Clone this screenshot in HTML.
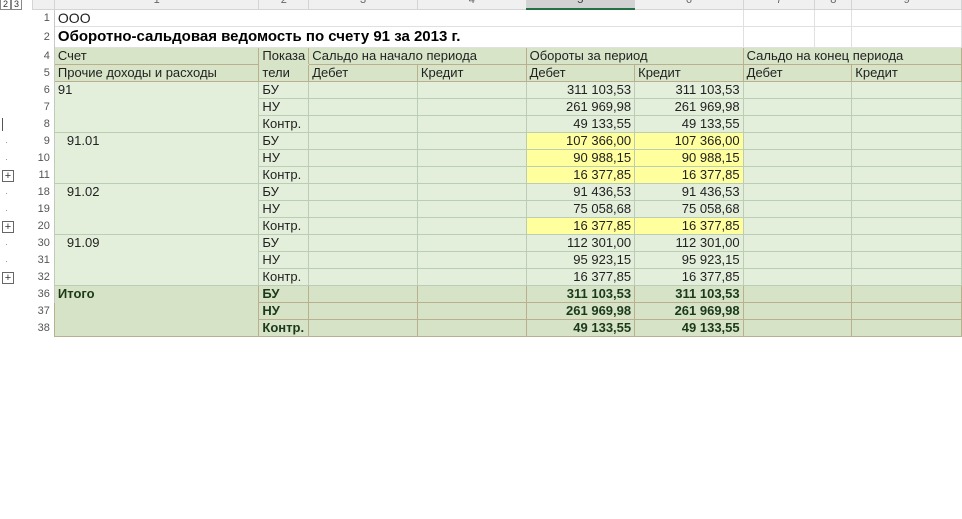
<!DOCTYPE html>
<html><head><meta charset="utf-8"><style>
body{margin:0;width:962px;height:519px;background:#fff;overflow:hidden;font-family:"Liberation Sans",Arial,sans-serif;font-size:13px;color:#222;position:relative}
table{position:absolute;left:32px;top:-9px;border-collapse:collapse;table-layout:fixed}
td{padding:0 3px;white-space:nowrap;overflow:hidden;height:16px;line-height:16px;border:1px solid #bccdb6}
td.rh{color:#555;text-align:right;font-size:11px;border:none;border-right:1px solid #c8c8c8;padding:0 4px 0 0;background:#fff}
tr.ch td{background:#f0f0f0;border:1px solid #d4d4d4;text-align:center;color:#666;font-size:11px}
tr.ch td.sel{background:#d2d2d2;border-bottom:2px solid #217346;color:#333}
tr.w td{background:#fff;border:1px solid #e0e0e0}
tr.w td.rh{border:none;border-right:1px solid #c8c8c8}
.h{background:#d8e4c8;border-color:#b9b08f}
.d{background:#e3eedb}
.y{background:#ffff9e}
.r{text-align:right}
.t{background:#d7e3c7;font-weight:bold;color:#1a3a1a;border-color:#b9b08f}
.p{position:absolute;left:2px;width:10px;height:10px;border:1px solid #666;font-size:11px;line-height:10px;text-align:center;color:#333}
.dot{position:absolute;left:6px;width:1px;height:1px;background:#999}
</style></head><body>
<div style="position:absolute;left:0;top:0;width:30px;height:8px;font-size:9px;line-height:8px;color:#333"><span style="border:1px solid #888;padding:0 2px">2</span><span style="border:1px solid #888;padding:0 2px">3</span></div>
<div style="position:absolute;left:2px;top:118px;width:1px;height:13px;background:#555"></div>
<div class="dot" style="top:142px"></div><div class="dot" style="top:159px"></div>
<div class="p" style="top:170px">+</div>
<div class="dot" style="top:193px"></div><div class="dot" style="top:210px"></div>
<div class="p" style="top:221px">+</div>
<div class="dot" style="top:244px"></div><div class="dot" style="top:261px"></div>
<div class="p" style="top:272px">+</div>
<table>
<colgroup><col style="width:22px"><col style="width:205px"><col style="width:48px"><col style="width:109px"><col style="width:109px"><col style="width:109px"><col style="width:109px"><col style="width:72px"><col style="width:37px"><col style="width:110px"></colgroup>
<tr class="ch"><td></td><td>1</td><td>2</td><td>3</td><td>4</td><td class="sel">5</td><td>6</td><td>7</td><td>8</td><td>9</td></tr>
<tr class="w"><td class="rh">1</td><td colspan="6" style="font-size:14px">ООО</td><td></td><td></td><td></td></tr>
<tr class="w"><td class="rh" style="height:21px">2</td><td colspan="6" style="font-size:15px;font-weight:bold;color:#000">Оборотно-сальдовая ведомость по счету 91 за 2013 г.</td><td></td><td></td><td></td></tr>
<tr><td class="rh">4</td><td class="h">Счет</td><td class="h" style="border-bottom-color:#d8e4c8">Показа</td><td class="h" colspan="2">Сальдо на начало периода</td><td class="h" colspan="2">Обороты за период</td><td class="h" colspan="3">Сальдо на конец периода</td></tr>
<tr><td class="rh">5</td><td class="h">Прочие доходы и расходы</td><td class="h" style="border-top-color:#d8e4c8">тели</td><td class="h">Дебет</td><td class="h">Кредит</td><td class="h">Дебет</td><td class="h">Кредит</td><td class="h" colspan="2">Дебет</td><td class="h">Кредит</td></tr>
<tr><td class="rh">6</td><td class="d" rowspan="3" style="vertical-align:top">91</td><td class="d">БУ</td><td class="d"></td><td class="d"></td><td class="d r">311 103,53</td><td class="d r">311 103,53</td><td class="d" colspan="2"></td><td class="d"></td></tr>
<tr><td class="rh">7</td><td class="d">НУ</td><td class="d"></td><td class="d"></td><td class="d r">261 969,98</td><td class="d r">261 969,98</td><td class="d" colspan="2"></td><td class="d"></td></tr>
<tr><td class="rh">8</td><td class="d">Контр.</td><td class="d"></td><td class="d"></td><td class="d r">49 133,55</td><td class="d r">49 133,55</td><td class="d" colspan="2"></td><td class="d"></td></tr>
<tr><td class="rh">9</td><td class="d" rowspan="3" style="vertical-align:top;padding-left:12px">91.01</td><td class="d">БУ</td><td class="d"></td><td class="d"></td><td class="y r">107 366,00</td><td class="y r">107 366,00</td><td class="d" colspan="2"></td><td class="d"></td></tr>
<tr><td class="rh">10</td><td class="d">НУ</td><td class="d"></td><td class="d"></td><td class="y r">90 988,15</td><td class="y r">90 988,15</td><td class="d" colspan="2"></td><td class="d"></td></tr>
<tr><td class="rh">11</td><td class="d">Контр.</td><td class="d"></td><td class="d"></td><td class="y r">16 377,85</td><td class="y r">16 377,85</td><td class="d" colspan="2"></td><td class="d"></td></tr>
<tr><td class="rh">18</td><td class="d" rowspan="3" style="vertical-align:top;padding-left:12px">91.02</td><td class="d">БУ</td><td class="d"></td><td class="d"></td><td class="d r">91 436,53</td><td class="d r">91 436,53</td><td class="d" colspan="2"></td><td class="d"></td></tr>
<tr><td class="rh">19</td><td class="d">НУ</td><td class="d"></td><td class="d"></td><td class="d r">75 058,68</td><td class="d r">75 058,68</td><td class="d" colspan="2"></td><td class="d"></td></tr>
<tr><td class="rh">20</td><td class="d">Контр.</td><td class="d"></td><td class="d"></td><td class="y r">16 377,85</td><td class="y r">16 377,85</td><td class="d" colspan="2"></td><td class="d"></td></tr>
<tr><td class="rh">30</td><td class="d" rowspan="3" style="vertical-align:top;padding-left:12px">91.09</td><td class="d">БУ</td><td class="d"></td><td class="d"></td><td class="d r">112 301,00</td><td class="d r">112 301,00</td><td class="d" colspan="2"></td><td class="d"></td></tr>
<tr><td class="rh">31</td><td class="d">НУ</td><td class="d"></td><td class="d"></td><td class="d r">95 923,15</td><td class="d r">95 923,15</td><td class="d" colspan="2"></td><td class="d"></td></tr>
<tr><td class="rh">32</td><td class="d">Контр.</td><td class="d"></td><td class="d"></td><td class="d r">16 377,85</td><td class="d r">16 377,85</td><td class="d" colspan="2"></td><td class="d"></td></tr>
<tr><td class="rh">36</td><td class="t" rowspan="3" style="vertical-align:top">Итого</td><td class="t">БУ</td><td class="t"></td><td class="t"></td><td class="t r">311 103,53</td><td class="t r">311 103,53</td><td class="t" colspan="2"></td><td class="t"></td></tr>
<tr><td class="rh">37</td><td class="t">НУ</td><td class="t"></td><td class="t"></td><td class="t r">261 969,98</td><td class="t r">261 969,98</td><td class="t" colspan="2"></td><td class="t"></td></tr>
<tr><td class="rh">38</td><td class="t">Контр.</td><td class="t"></td><td class="t"></td><td class="t r">49 133,55</td><td class="t r">49 133,55</td><td class="t" colspan="2"></td><td class="t"></td></tr>
</table>
</body></html>
